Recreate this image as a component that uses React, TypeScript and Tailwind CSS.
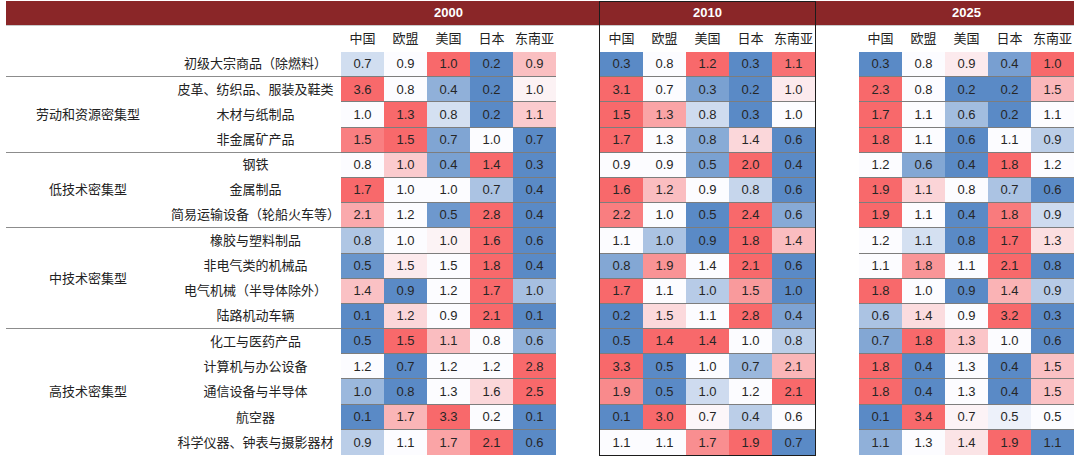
const COUNTRIES = ["中国", "欧盟", "美国", "日本", "东南亚"];

const GROUPS: { label: string; height: string; items: string[] }[] = [
  { label: "", height: "h-[25.2px]", items: ["初级大宗商品（除燃料）"] },
  { label: "劳动和资源密集型", height: "h-[75.6px]", items: ["皮革、纺织品、服装及鞋类", "木材与纸制品", "非金属矿产品"] },
  { label: "低技术密集型", height: "h-[75.6px]", items: ["钢铁", "金属制品", "简易运输设备（轮船火车等）"] },
  {
    label: "中技术密集型",
    height: "h-[100.8px]",
    items: ["橡胶与塑料制品", "非电气类的机械品", "电气机械（半导体除外）", "陆路机动车辆"],
  },
  {
    label: "高技术密集型",
    height: "h-[126px]",
    items: ["化工与医药产品", "计算机与办公设备", "通信设备与半导体", "航空器", "科学仪器、钟表与摄影器材"],
  },
];

// values carry an extra decimal where the rounded figure hides the real order
const YEARS: { year: string; boxed?: boolean; rows: number[][] }[] = [
  {
    year: "2000",
    rows: [
      [0.7, 0.88, 1.0, 0.2, 0.93],
      [3.6, 0.8, 0.4, 0.2, 1.0],
      [1.0, 1.3, 0.8, 0.2, 1.1],
      [1.46, 1.54, 0.74, 1.0, 0.66],
      [0.8, 1.0, 0.4, 1.4, 0.3],
      [1.7, 1.0, 1.0, 0.7, 0.4],
      [2.1, 1.2, 0.5, 2.8, 0.4],
      [0.8, 0.98, 1.02, 1.6, 0.6],
      [0.5, 1.52, 1.48, 1.8, 0.4],
      [1.4, 0.9, 1.2, 1.7, 1.04],
      [0.1, 1.2, 0.9, 2.1, 0.1],
      [0.5, 1.5, 1.1, 0.8, 0.6],
      [1.2, 0.7, 1.2, 1.2, 2.8],
      [1.0, 0.8, 1.3, 1.6, 2.5],
      [0.1, 1.7, 3.3, 0.2, 0.1],
      [0.9, 1.1, 1.7, 2.1, 0.6],
    ],
  },
  {
    year: "2010",
    boxed: true,
    rows: [
      [0.3, 0.8, 1.16, 0.3, 1.14],
      [3.1, 0.7, 0.3, 0.2, 1.0],
      [1.5, 1.3, 0.8, 0.3, 1.0],
      [1.7, 1.3, 0.8, 1.4, 0.6],
      [0.9, 0.9, 0.5, 2.0, 0.4],
      [1.6, 1.2, 0.9, 0.8, 0.6],
      [2.2, 1.0, 0.5, 2.4, 0.64],
      [1.1, 1.0, 0.9, 1.8, 1.4],
      [0.8, 1.9, 1.4, 2.1, 0.6],
      [1.7, 1.1, 1.04, 1.5, 0.96],
      [0.2, 1.5, 1.1, 2.8, 0.4],
      [0.5, 1.4, 1.4, 1.0, 0.8],
      [3.3, 0.5, 1.0, 0.7, 2.1],
      [1.9, 0.5, 1.0, 1.2, 2.1],
      [0.1, 3.0, 0.7, 0.4, 0.6],
      [1.1, 1.1, 1.7, 1.9, 0.7],
    ],
  },
  {
    year: "2025",
    rows: [
      [0.3, 0.84, 0.86, 0.4, 1.0],
      [2.3, 0.8, 0.2, 0.2, 1.5],
      [1.7, 1.1, 0.6, 0.2, 1.1],
      [1.8, 1.1, 0.6, 1.1, 0.9],
      [1.2, 0.6, 0.4, 1.8, 1.2],
      [1.9, 1.1, 0.8, 0.7, 0.6],
      [1.9, 1.1, 0.4, 1.8, 0.9],
      [1.2, 1.1, 0.8, 1.7, 1.3],
      [1.1, 1.8, 1.1, 2.1, 0.8],
      [1.8, 1.0, 0.86, 1.4, 0.94],
      [0.6, 1.4, 0.9, 3.2, 0.3],
      [0.7, 1.8, 1.3, 1.0, 0.6],
      [1.8, 0.4, 1.3, 0.4, 1.5],
      [1.8, 0.4, 1.3, 0.4, 1.5],
      [0.1, 3.4, 0.7, 0.48, 0.52],
      [1.14, 1.3, 1.4, 1.9, 1.06],
    ],
  },
];

const BLUE = [90, 138, 198];
const WHITE = [252, 252, 255];
const RED = [248, 105, 107];

function mix(a: number[], b: number[], t: number) {
  const c = a.map((v, i) => Math.round(v + (b[i] - v) * t));
  return `rgb(${c[0]}, ${c[1]}, ${c[2]})`;
}

// Excel style 3-colour scale per row: min blue, median white, max red
function cellColor(v: number, row: number[]) {
  const sorted = [...row].sort((a, b) => a - b);
  const min = sorted[0];
  const mid = sorted[2];
  const max = sorted[4];
  if (v <= mid) {
    const t = mid === min ? 0 : (mid - v) / (mid - min);
    return mix(WHITE, BLUE, t);
  }
  const t = max === mid ? 0 : (v - mid) / (max - mid);
  return mix(WHITE, RED, t);
}

const FONT = "font-['Liberation_Sans','Noto_Sans_CJK_SC',sans-serif]";

function HeaderBar({ children }: { children?: React.ReactNode }) {
  return (
    <div className="h-[25px] bg-[#8a2628] border-b border-[#c9c9c9] flex items-center justify-center text-white font-bold text-[13px]">
      {children}
    </div>
  );
}

function YearBlock({ year, boxed, rows }: { year: string; boxed?: boolean; rows: number[][] }) {
  return (
    <div className="relative w-[215px] shrink-0">
      <HeaderBar>{year}</HeaderBar>
      <div className="h-[26px] flex">
        {COUNTRIES.map(c => (
          <div key={c} className="w-[43px] flex items-center justify-center text-[13px] text-[#222]">
            {c}
          </div>
        ))}
      </div>
      {rows.map((row, i) => (
        <div
          key={i}
          className={`h-[25.2px] flex ${i < rows.length - 1 ? "border-b border-[#7d7d7d]" : ""}`}
        >
          {row.map((v, j) => (
            <div
              key={j}
              className="w-[43px] flex items-center justify-center text-[13px] text-[#262626]"
              style={{ backgroundColor: cellColor(v, row) }}
            >
              {v.toFixed(1)}
            </div>
          ))}
        </div>
      ))}
      {boxed && (
        <div className="absolute left-[-1px] right-[-1px] top-[0px] bottom-[-1px] border-[1.5px] border-[#1c1c1c] pointer-events-none" />
      )}
    </div>
  );
}

function Spacer() {
  return (
    <div className="w-[44px] shrink-0">
      <HeaderBar />
    </div>
  );
}

export default function App() {
  return (
    <div className={`w-[1080px] h-[464px] bg-white pt-[1px] pl-[6px] flex items-start ${FONT}`}>
      <div className="w-[335px] shrink-0">
        <HeaderBar />
        <div className="h-[26px]" />
        {GROUPS.map((g, gi) => (
          <div
            key={gi}
            className={`flex ${g.height} ${gi < GROUPS.length - 1 ? "border-b-[1.5px] border-[#8c8c8c]" : ""}`}
          >
            <div className="w-[164px] flex items-center justify-center text-[13px] text-[#222]">{g.label}</div>
            <div className="w-[171px] flex flex-col">
              {g.items.map(item => (
                <div key={item} className="flex-1 flex items-center justify-center text-[13px] text-[#222] whitespace-nowrap">
                  {item}
                </div>
              ))}
            </div>
          </div>
        ))}
      </div>
      <YearBlock {...YEARS[0]} />
      <Spacer />
      <YearBlock {...YEARS[1]} />
      <Spacer />
      <YearBlock {...YEARS[2]} />
    </div>
  );
}
